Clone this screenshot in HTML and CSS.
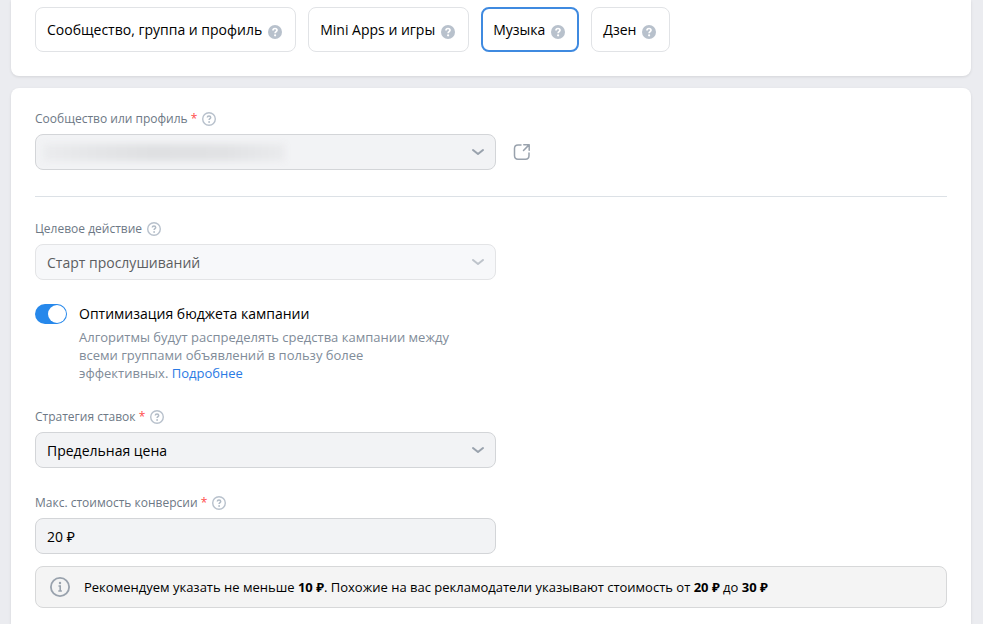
FILE: index.html
```html
<!DOCTYPE html>
<html lang="ru">
<head>
<meta charset="utf-8">
<meta name="viewport" content="width=device-width, initial-scale=1">
<title>Настройки кампании</title>
<link rel="stylesheet" href="styles.css">
</head>
<body>
<svg class="sprite" aria-hidden="true">
  <symbol id="help-solid" viewBox="0 0 14 14">
    <circle cx="7" cy="7" r="7" fill="#b8c1cc"/>
    <path d="M5 5.500C5 4.200 5.900 3.500 7 3.500s2 .7 2 1.800c0 1.300-1.900 1.400-1.900 2.900" fill="none" stroke="#fff" stroke-width="1.700"/>
    <circle cx="7.100" cy="10.300" r="1.100" fill="#fff"/>
  </symbol>
  <symbol id="help-outline" viewBox="0 0 14 14">
    <circle cx="7" cy="7" r="6.300" fill="none" stroke="#b8c1cc" stroke-width="1.400"/>
    <path d="M5.300 5.600c0-1.100.8-1.700 1.700-1.700s1.700.6 1.700 1.500c0 1.200-1.600 1.200-1.600 2.500" fill="none" stroke="#b1bbc6" stroke-width="1.500"/>
    <circle cx="7.100" cy="10" r=".9" fill="#b1bbc6"/>
  </symbol>
  <symbol id="chevron" viewBox="0 0 12 8">
    <path d="M1 2l5 4 5-4" fill="none" stroke="#99a2ad" stroke-width="2" stroke-linecap="round" stroke-linejoin="round"/>
  </symbol>
</svg>
<main class="page">
  <section class="card tabs-card">
    <div class="tabs">
      <button class="tab" type="button">Сообщество, группа и профиль<svg class="help help-tab"><use href="#help-solid"/></svg></button>
      <button class="tab" type="button">Mini Apps и игры<svg class="help help-tab"><use href="#help-solid"/></svg></button>
      <button class="tab tab-active" type="button" aria-pressed="true">Музыка<svg class="help help-tab"><use href="#help-solid"/></svg></button>
      <button class="tab" type="button">Дзен<svg class="help help-tab"><use href="#help-solid"/></svg></button>
    </div>
  </section>

  <form class="card form">
    <div class="field">
      <label class="label" for="profile"><span>Сообщество или профиль <span class="required">*</span></span><svg class="help"><use href="#help-outline"/></svg></label>
      <div class="control-row">
        <div class="select">
          <select id="profile" class="control"><option></option></select>
          <span class="masked"></span>
          <svg class="chevron"><use href="#chevron"/></svg>
        </div>
        <button class="open" type="button" aria-label="Открыть">
          <svg width="18" height="18" viewBox="0 0 18 18" fill="none" stroke="#99a2ad" stroke-width="1.500" stroke-linecap="round" stroke-linejoin="round"><path d="M8 2H5C2.700 2 1.500 3.200 1.500 5.500v7C1.500 14.800 2.700 16.200 5 16.200h7.500c2.300 0 3.500-1.400 3.500-3.700V10"/><path d="M10.800 1.700H16.200V7.200M16 1.900L10.500 7.500"/></svg>
        </button>
      </div>
    </div>

    <hr class="divider">

    <div class="field">
      <label class="label" for="action">Целевое действие<svg class="help"><use href="#help-outline"/></svg></label>
      <div class="select select-disabled">
        <select id="action" class="control" disabled><option>Старт прослушиваний</option></select>
        <svg class="chevron"><use href="#chevron"/></svg>
      </div>
    </div>

    <div class="toggle-row">
      <input id="optimization" class="switch" type="checkbox" checked>
      <div class="toggle-text">
        <label class="toggle-title" for="optimization">Оптимизация бюджета кампании</label>
        <p class="hint">Алгоритмы будут распределять средства кампании между всеми группами объявлений в пользу более <span class="nowrap">эффективных. <a class="link" href="#">Подробнее</a></span></p>
      </div>
    </div>

    <div class="field">
      <label class="label" for="strategy"><span>Стратегия ставок <span class="required">*</span></span><svg class="help"><use href="#help-outline"/></svg></label>
      <div class="select">
        <select id="strategy" class="control"><option>Предельная цена</option></select>
        <svg class="chevron"><use href="#chevron"/></svg>
      </div>
    </div>

    <div class="field field-price">
      <label class="label" for="price"><span>Макс. стоимость конверсии <span class="required">*</span></span><svg class="help"><use href="#help-outline"/></svg></label>
      <div class="select"><input id="price" class="control" type="text" value="20 ₽"></div>
    </div>

    <div class="notice">
      <svg width="20" height="20" viewBox="0 0 20 20"><circle cx="10" cy="10" r="9.100" fill="none" stroke="#99a2ad" stroke-width="1.800"/><circle cx="10" cy="6" r="1.200" fill="#99a2ad"/><path d="M8.500 9H10.200V14M8.300 14h3.600" fill="none" stroke="#99a2ad" stroke-width="1.600"/></svg>
      <p class="notice-text">Рекомендуем указать не меньше <b>10 ₽</b>. Похожие на вас рекламодатели указывают стоимость от <b>20 ₽</b> до <b>30 ₽</b></p>
    </div>
  </form>
</main>
</body>
</html>
```
FILE: styles.css
```css
*, *::before { box-sizing: border-box; }

body {
  margin: 0;
  background: #ebecf0;
  color: #000;
  font: 14px/20px "Open Sans", "Noto Sans", sans-serif;
}

button, input, select { font: inherit; color: inherit; }

.sprite { position: absolute; width: 0; height: 0; }

.page {
  display: flex;
  flex-direction: column;
  gap: 12px;
  min-height: 100vh;
  padding: 0 12px 0 11px;
}

.card {
  background: #fff;
  border-radius: 8px;
  padding: 0 24px;
  box-shadow: 0 1px 3px rgba(0, 0, 0, 0.1);
}

.tabs-card {
  padding-top: 7px;
  padding-bottom: 24px;
  border-radius: 0 0 8px 8px;
}

.tabs { display: flex; gap: 12px; }

.tab {
  display: flex;
  align-items: center;
  gap: 6px;
  height: 45px;
  padding: 0 13px 0 11px;
  border: 1px solid #e1e3e6;
  border-radius: 8px;
  background: #fff;
  white-space: nowrap;
}

.tab-active {
  padding: 0 12px 0 10px;
  border: 2px solid #3f8ae0;
}

.help { width: 14px; height: 14px; flex: none; }
.help-tab { margin-top: 4px; }

.form {
  flex: 1;
  padding-top: 23px;
  padding-bottom: 16px;
  border-radius: 8px 8px 0 0;
}

.label {
  display: flex;
  align-items: center;
  gap: 5px;
  margin-bottom: 7px;
  color: #6d7885;
  font-size: 12px;
  line-height: 16px;
}

.required { color: #ff4b4b; }

.control-row { display: flex; align-items: center; gap: 17px; }

.select {
  position: relative;
  flex: 0 1 461px;
  max-width: 461px;
}

.control {
  display: block;
  width: 100%;
  height: 36px;
  padding: 1px 36px 0 11px;
  border: 1px solid #d3d5d8;
  border-radius: 8px;
  background: #f2f3f5;
  appearance: none;
  opacity: 1;
}

.select-disabled .control {
  border-color: #e3e4e6;
  background: #f7f8fa;
  color: #5c5e61;
}

.chevron {
  position: absolute;
  top: 14px;
  right: 12px;
  width: 12px;
  height: 8px;
  pointer-events: none;
}

.select-disabled .chevron { opacity: 0.6; }

.masked {
  position: absolute;
  top: 10px;
  left: 8px;
  width: 242px;
  height: 17px;
  background: linear-gradient(90deg, #ebecee, #e5e6e8 20%, #dfe0e2 45%, #e1e2e4 75%, #eaebed);
  filter: blur(3px);
  pointer-events: none;
}

.open {
  display: flex;
  padding: 0;
  border: 0;
  background: none;
}

.divider {
  height: 1px;
  margin: 26px 0 24px;
  border: 0;
  background: #dce1e6;
}

.toggle-row {
  display: flex;
  gap: 12px;
  max-width: 461px;
  margin: 24px 0 26px;
}

.switch {
  display: flex;
  flex: none;
  width: 32px;
  height: 20px;
  margin: 0;
  padding: 1px;
  border-radius: 10px;
  background: #2688eb;
  appearance: none;
}

.switch::before {
  content: "";
  width: 18px;
  height: 18px;
  margin-left: auto;
  border-radius: 50%;
  background: #fff;
}

.toggle-text { max-width: 385px; }
.toggle-title { display: block; }

.hint {
  margin: 4px 0 0;
  color: #818c99;
  font-size: 13px;
  line-height: 18px;
}

.nowrap { white-space: nowrap; }

.link { color: #2a7ae4; text-decoration: none; }

.toggle-row + .field { margin-top: 27px; }
.field-price { margin-top: 27px; }

.notice {
  display: flex;
  align-items: center;
  gap: 14px;
  min-height: 42px;
  margin-top: 12px;
  padding: 0 14px;
  border: 1px solid #d7d8d9;
  border-radius: 8px;
  background: #f4f4f4;
}

.notice svg { flex: none; }

.notice-text {
  margin: 0;
  font-size: 13px;
  line-height: 18px;
}
```
